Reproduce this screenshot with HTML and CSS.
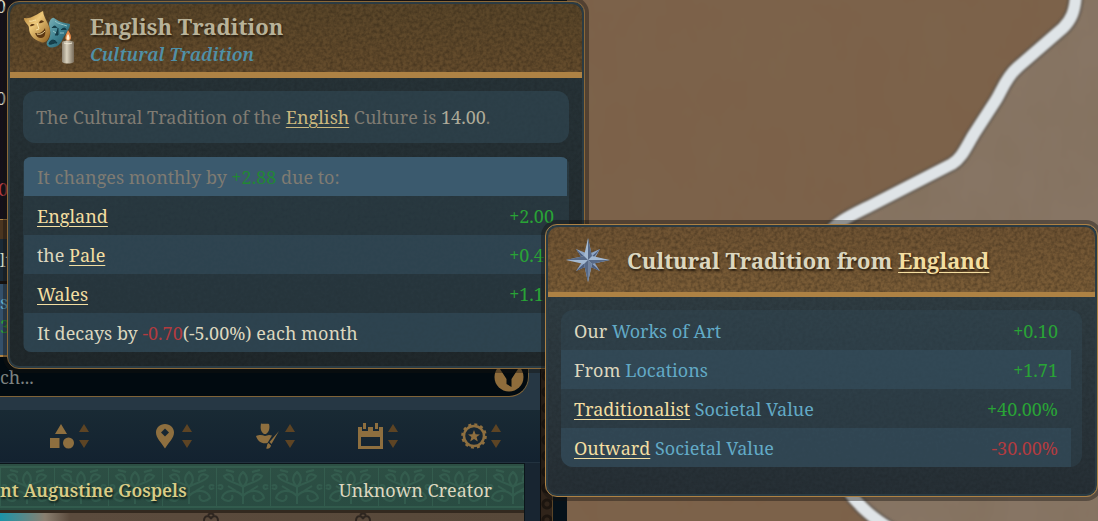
FILE: index.html
```
<!DOCTYPE html>
<html lang="en">
<head>
    <meta charset="UTF-8">
    <meta name="viewport" content="width=device-width, initial-scale=1.0">
    <title>Cultural Tradition</title>
    <link rel="stylesheet" href="styles.css">
</head>
<body>
    <!-- Map -->
    <svg class="map" viewBox="0 0 1098 521" preserveAspectRatio="xMaxYMin slice" aria-hidden="true">
        <defs>
            <filter id="soft"><feGaussianBlur stdDeviation="1"/></filter>
            <filter id="ground" x="0" y="0" width="100%" height="100%">
                <feTurbulence type="fractalNoise" baseFrequency="0.02 0.012" numOctaves="4" seed="4"/>
                <feColorMatrix values="0 0 0 0 0.2  0 0 0 0 0.14  0 0 0 0 0.08  0.5 0 0 0 -0.15"/>
            </filter>
        </defs>
        <rect width="1098" height="521" fill="#7c6149"/>
        <path d="M1076 0C1075 12 1071 20 1063 28L1018 67C1007 76 1002 90 996 100L974 134C966 147 962 158 952 164L834 225L850 494C863 508 875 518 890 528H1098V0Z" fill="#877564"/>
        <rect width="1098" height="521" filter="url(#ground)"/>
        <g fill="none" stroke-linejoin="round">
            <path d="M1076 -6C1075 12 1071 20 1063 28L1018 67C1007 76 1002 90 996 100L974 134C966 147 962 158 952 164L870 206C850 216 836 222 826 236M846 488C860 508 875 520 896 532" stroke="#4e4a45" stroke-width="16" opacity=".6" filter="url(#soft)"/>
            <path d="M1076 -6C1075 12 1071 20 1063 28L1018 67C1007 76 1002 90 996 100L974 134C966 147 962 158 952 164L870 206C850 216 836 222 826 236M846 488C860 508 875 520 896 532" stroke="#dfe4e7" stroke-width="12" filter="url(#soft)"/>
        </g>
    </svg>

    <!-- Works of art panel -->
    <main class="panel">
        <div class="panel-body">
            <div class="scene">
                <span class="scene-value">0</span>
                <span class="scene-value">0</span>
                <span class="scene-value negative">00</span>
            </div>
            <div class="strip"></div>
            <div class="culture-name">lt</div>
            <div class="culture-info">
                <span class="concept">st</span>
                <span class="positive">3</span>
            </div>

            <div class="search-row">
                <div class="search">
                    <input type="text" class="search-input" placeholder="ch..." aria-label="Search">
                    <button type="button" class="filter-btn" aria-label="Filter">
                        <svg viewBox="0 0 30 30" width="30" height="30">
                            <circle cx="15" cy="15" r="14.5" fill="#8e6c3b"/>
                            <path d="M6 7H24L17.500 17V25L12.500 22V17Z" fill="#020a0f"/>
                        </svg>
                    </button>
                </div>
            </div>

            <div class="sort-bar">
                <button type="button" class="sort-btn" aria-label="Sort by type">
                    <svg viewBox="0 0 26 26" width="26" height="26" fill="currentColor">
                        <path d="M12 1L18 11H6ZM1 15H10.500V25H1Z"/>
                        <circle cx="19.500" cy="20" r="5.500"/>
                    </svg>
                    <svg class="arrows" viewBox="0 0 10 26" width="10" height="26"><path d="M5 1L10 9H0ZM5 25L0 17H10Z"/></svg>
                </button>
                <button type="button" class="sort-btn" aria-label="Sort by location">
                    <svg viewBox="0 0 26 26" width="26" height="26" fill="currentColor">
                        <path fill-rule="evenodd" d="M13 1C7.800 1 4 4.800 4 9.500C4 15 9 19 13 25.500C17 19 22 15 22 9.500C22 4.800 18.200 1 13 1ZM13 5.500L17 9.500L13 13.500L9 9.500Z"/>
                    </svg>
                    <svg class="arrows" viewBox="0 0 10 26" width="10" height="26"><path d="M5 1L10 9H0ZM5 25L0 17H10Z"/></svg>
                </button>
                <button type="button" class="sort-btn" aria-label="Sort by creator">
                    <svg viewBox="0 0 26 26" width="26" height="26" fill="currentColor">
                        <path d="M6 0.500C9 1.500 12 0 14 1C15 4 14.500 9 11 11H9C6 9 5 6 6 0.500ZM1 13C5 11.500 7 12 10 13L14 12L17 12.500L12.500 20C7 21 3 19 1 13Z"/>
                        <path d="M24 8L16.500 21L14.500 19ZM13.500 20L16 22.500C15.500 25.500 13 26 11 25.500C12.500 23.500 11.500 21 13.500 20Z"/>
                    </svg>
                    <svg class="arrows" viewBox="0 0 10 26" width="10" height="26"><path d="M5 1L10 9H0ZM5 25L0 17H10Z"/></svg>
                </button>
                <button type="button" class="sort-btn" aria-label="Sort by date">
                    <svg viewBox="0 0 26 26" width="26" height="26" fill="currentColor">
                        <path fill-rule="evenodd" d="M0 4H4V8H10V4H15V8H21V4H25V26H0ZM3 14V23H22V14Z"/>
                        <path d="M5 0H8V6H5ZM17 0H20V6H17Z"/>
                    </svg>
                    <svg class="arrows" viewBox="0 0 10 26" width="10" height="26"><path d="M5 1L10 9H0ZM5 25L0 17H10Z"/></svg>
                </button>
                <button type="button" class="sort-btn" aria-label="Sort by quality">
                    <svg viewBox="0 0 26 26" width="26" height="26" fill="currentColor">
                        <circle cx="13" cy="13" r="10" fill="none" stroke="currentColor" stroke-width="2.500"/>
                        <circle cx="13" cy="13" r="11.700" fill="none" stroke="currentColor" stroke-width="2.200" stroke-dasharray="3 3.125"/>
                        <path d="M13 7L14.600 11.200L19 11.400L15.600 14.100L16.800 18.500L13 16L9.200 18.500L10.400 14.100L7 11.400L11.400 11.200Z"/>
                    </svg>
                    <svg class="arrows" viewBox="0 0 10 26" width="10" height="26"><path d="M5 1L10 9H0ZM5 25L0 17H10Z"/></svg>
                </button>
            </div>

            <article class="work">
                <header class="work-header">
                    <h3>nt Augustine Gospels</h3>
                    <span>Unknown Creator</span>
                </header>
                <div class="work-picture">
                    <svg viewBox="0 0 170 8" width="170" height="8" fill="none" stroke="#2e2620" stroke-width="2">
                        <path d="M1 8C1 2 7 2 8 6C9 2 15 2 15 8M5 2C7 0 9 0 11 2M153 8C153 2 159 2 160 6C161 2 167 2 167 8M157 2C159 0 161 0 163 2"/>
                    </svg>
                </div>
            </article>
        </div>
        <div class="panel-trim"></div>
    </main>

    <!-- Tooltip: English Tradition -->
    <section class="tooltip tooltip-tradition">
        <header class="tooltip-header">
            <svg class="masks" viewBox="0 0 52 54" width="52" height="54" aria-hidden="true">
                <defs>
                    <linearGradient id="gold" x1="0" y1="0" x2="1" y2="1">
                        <stop offset="0" stop-color="#b07b2f"/><stop offset=".4" stop-color="#edc87a"/><stop offset="1" stop-color="#8a5a1c"/>
                    </linearGradient>
                    <linearGradient id="teal" x1="0" y1="0" x2="1" y2="1">
                        <stop offset="0" stop-color="#7fb4bb"/><stop offset=".5" stop-color="#3f8391"/><stop offset="1" stop-color="#1d4f5f"/>
                    </linearGradient>
                    <linearGradient id="wax">
                        <stop offset="0" stop-color="#8f8574"/><stop offset=".4" stop-color="#dad2be"/><stop offset="1" stop-color="#776b5a"/>
                    </linearGradient>
                </defs>
                <path d="M25 12C26 9 28 6 30 7C35 11 41 12 46 13C46 18 42 22 39 27C37 34 31 38 25 36C21 33 23 31 25 28C28 22 25 17 25 12Z" fill="url(#teal)"/>
                <path d="M28 17C30 14 32 15 33 17M37 19C40 16 42 17 42 19M34 17L34 24L31 24M25 33C26 28 31 28 33 32C30 31 28 34 25 33Z" stroke="#123945" stroke-width="1" fill="#173f4b"/>
                <path d="M29 20L32 22M36 22L40 22M31 10C34 13 38 13 43 15" stroke="#93c2c6" stroke-width="1" fill="none"/>
                <path d="M0 7C8 8 13 3 19 0C20 9 27 14 26 22C25 29 21 33 17 31C9 29 5 23 5 17C5 13 0 12 0 7Z" fill="url(#gold)"/>
                <path d="M6 15C7 12 10 13 11 14C9 14 8 16 6 15ZM15 12C16 8 19 9 20 11C18 11 17 13 15 12ZM11 22C16 23 19 21 21 17C22 23 21 27 17 27C14 27 12 25 11 22Z" fill="#5b3713"/>
                <path d="M13 12L15 18L12 19M5 10C8 11 10 9 12 9M13 23C17 24 19 22 21 20" stroke="#f8e2a4" stroke-width="1" fill="none"/>
                <path d="M44 19C48 25 48 29 44 30C40 29 41 25 44 19Z" fill="#e58a4b"/>
                <path d="M44 23C46 26 46 29 44 29C42 29 42 26 44 23Z" fill="#fff0cf"/>
                <path d="M38 31C41 29 47 29 50 31V51C47 53 41 53 38 51Z" fill="url(#wax)"/>
                <path d="M40 32C42 33 46 33 48 32" stroke="#f1ead7" fill="none"/>
            </svg>
            <div class="heading">
                <h2>English Tradition</h2>
                <p class="subtitle">Cultural Tradition</p>
            </div>
        </header>
        <div class="tooltip-body">
            <p class="summary">The Cultural Tradition of the <a href="#english">English</a> Culture is <b>14.00</b>.</p>
            <div class="breakdown">
                <table>
                    <thead>
                        <tr><th colspan="2">It changes monthly by <span class="positive">+2.88</span> due to:</th></tr>
                    </thead>
                    <tbody>
                        <tr><td><a href="#england">England</a></td><td class="value positive">+2.00</td></tr>
                        <tr><td>the <a href="#pale">Pale</a></td><td class="value positive">+0.46</td></tr>
                        <tr><td><a href="#wales">Wales</a></td><td class="value positive">+1.12</td></tr>
                        <tr><td colspan="2">It decays by <span class="negative">-0.70</span>(-5.00%) each month</td></tr>
                    </tbody>
                </table>
            </div>
        </div>
    </section>

    <!-- Tooltip: Cultural Tradition from England -->
    <section class="tooltip tooltip-source">
        <header class="tooltip-header">
            <svg class="compass" viewBox="0 0 46 46" width="46" height="46" aria-hidden="true">
                <path d="M23 23L21 16L11 12L17 21ZM23 23L30 21L35 12L26 16ZM23 23L26 30L35 34L29 25ZM23 23L17 25L11 34L20 30Z" fill="#8ea5c4"/>
                <path d="M23 23L11 12L17 21ZM23 23L35 12L29 20ZM23 23L35 34L26 30ZM23 23L11 34L20 30Z" fill="#4c5d7c"/>
                <path d="M23 1L27 19L45 23L27 27L23 45L19 27L1 23L19 19Z" fill="#a3b9d2"/>
                <path d="M23 1L27 19L23 23ZM45 23L27 27L23 23ZM23 45L19 27L23 23ZM1 23L19 19L23 23Z" fill="#576986"/>
                <path d="M23 45L27 27L23 23Z" fill="#71839f"/>
            </svg>
            <h2>Cultural Tradition from <a href="#england">England</a></h2>
        </header>
        <div class="tooltip-body">
            <div class="breakdown">
                <table>
                    <tbody>
                        <tr><td>Our <span class="concept">Works of Art</span></td><td class="value positive">+0.10</td></tr>
                        <tr><td>From <span class="concept">Locations</span></td><td class="value positive">+1.71</td></tr>
                        <tr><td><a href="#traditionalist">Traditionalist</a> <span class="concept">Societal Value</span></td><td class="value positive">+40.00%</td></tr>
                        <tr><td><a href="#outward">Outward</a> <span class="concept">Societal Value</span></td><td class="value negative">-30.00%</td></tr>
                    </tbody>
                </table>
            </div>
        </div>
    </section>
</body>
</html>
```
FILE: styles.css
```
:root {
    --leather: url("data:image/svg+xml,%3Csvg xmlns='http://www.w3.org/2000/svg' width='240' height='240'%3E%3Cfilter id='n' x='0' y='0' width='100%25' height='100%25'%3E%3CfeTurbulence type='fractalNoise' baseFrequency='.3' numOctaves='2' stitchTiles='stitch'/%3E%3CfeColorMatrix values='0 0 0 0 0 0 0 0 0 0 0 0 0 0 0 .5 0 0 0 -.16'/%3E%3C/filter%3E%3Crect width='240' height='240' filter='url(%23n)'/%3E%3C/svg%3E");
    --leather-soft: url("data:image/svg+xml,%3Csvg xmlns='http://www.w3.org/2000/svg' width='240' height='240'%3E%3Cfilter id='n' x='0' y='0' width='100%25' height='100%25'%3E%3CfeTurbulence type='fractalNoise' baseFrequency='.3' numOctaves='2' stitchTiles='stitch'/%3E%3CfeColorMatrix values='0 0 0 0 0 0 0 0 0 0 0 0 0 0 0 .2 0 0 0 -.06'/%3E%3C/filter%3E%3Crect width='240' height='240' filter='url(%23n)'/%3E%3C/svg%3E");
    --damask: url("data:image/svg+xml,%3Csvg xmlns='http://www.w3.org/2000/svg' width='54' height='46' fill='none' stroke='%23467d68' stroke-opacity='.3' stroke-width='2'%3E%3Cpath d='M0 3H54M0 43H54M0 3V43M27 8C20 14 24 20 27 23C30 20 34 14 27 8ZM27 23C20 18 10 18 8 12C14 8 18 12 17 17M27 23C34 18 44 18 46 12C40 8 36 12 37 17M27 23V40M27 32C20 24 8 26 6 34C12 40 18 36 16 31M27 32C34 24 46 26 48 34C42 40 36 36 38 31M2 22C8 18 8 28 2 24M52 22C46 18 46 28 52 24M12 22L20 27M42 22L34 27M10 6L18 8M44 6L36 8'/%3E%3C/svg%3E");
    --text: #dcd7bf;
    --link: #f3dea1;
    --gold: #ae8244;
}

* {
    margin: 0;
    padding: 0;
    box-sizing: border-box;
}

body {
    min-height: 100vh;
    background-color: #7a5f47;
    color: var(--text);
    font-family: "Noto Serif", "DejaVu Serif Condensed", "DejaVu Serif", serif;
    font-size: 18px;
    line-height: 24px;
    overflow: hidden;
}

button,
input {
    border: none;
    background: none;
    color: inherit;
    font: inherit;
}

a {
    color: var(--link);
    text-decoration: underline;
    text-decoration-thickness: 1px;
    text-underline-offset: 3px;
}

svg {
    display: block;
}

.positive {
    color: #29a336;
}

.negative {
    color: #b23b3f;
}

.concept {
    color: #62aac6;
}

.map {
    position: absolute;
    inset: 0;
    width: 100%;
    height: 100%;
}

/* Panel */
.panel {
    position: relative;
    display: flex;
    width: 567px;
    max-width: 100%;
    height: 100vh;
    overflow: hidden;
    background-color: #06121a;
}

.panel-body {
    flex: 1;
    background-color: #182531;
}

.panel-trim {
    width: 13px;
    margin-right: 14px;
    border-left: 1px solid #0c0b0a;
    border-right: 1px solid #5a4528;
    background: repeating-radial-gradient(circle at 6px 8px, #30241a 0 2px, #1c150f 3px 5px, #30241a 6px 8px);
    background-size: 12px 16px;
}

.scene {
    display: flex;
    flex-direction: column;
    justify-content: space-between;
    height: 219px;
    padding-bottom: 24px;
    background: linear-gradient(90deg, #141019, #30404a 20%, #5c5048 40%, #161217 70%, #06080f);
    line-height: 12px;
}

.scene-value {
    display: flex;
    justify-content: flex-end;
    width: 6px;
}

.scene-value.negative {
    width: 8px;
}

.strip {
    height: 20px;
    border-top: 1px solid var(--gold);
    background-color: #4a3520;
}

.culture-name {
    height: 45px;
    border-bottom: 3px solid #17120f;
    background-color: #1b2a36;
    line-height: 42px;
}

.culture-info {
    display: flex;
    flex-direction: column;
    height: 73px;
    padding-top: 6px;
    border-bottom: 2px solid var(--gold);
    background-color: #34506a;
}

.search-row {
    padding-bottom: 13px;
    background-color: #263744;
}

.search {
    display: flex;
    align-items: center;
    height: 40px;
    margin-right: 11px;
    padding-right: 4px;
    border-right: 1px solid #6f5f3f;
    border-bottom: 1px solid #7f6338;
    border-radius: 0 0 20px 0;
    background-color: #010a10;
}

.search-input {
    flex: 1;
    min-width: 0;
}

.search-input::placeholder {
    color: #7c8280;
    opacity: 1;
}

.filter-btn {
    cursor: pointer;
}

.sort-bar {
    display: grid;
    grid-template-columns: repeat(5, 1fr);
    height: 53px;
    padding: 0 8px 0 18px;
    background: linear-gradient(#192a34, #132230);
    border-bottom: 1px solid #22323f;
}

.sort-btn {
    display: flex;
    justify-content: center;
    align-items: center;
    gap: 4px;
    color: #8e6f3f;
    cursor: pointer;
}

.sort-btn .arrows {
    fill: #5d4424;
}

.work {
    margin-right: 15px;
    border-top: 1px solid #0b151a;
    border-right: 1px solid #0b151a;
}

.work-header {
    display: flex;
    justify-content: space-between;
    align-items: center;
    height: 46px;
    padding: 6px 32px 0 0;
    background: var(--damask), linear-gradient(#2d4f44, #294c42);
}

.work-header h3 {
    color: #d9cc86;
    font-size: 18px;
    font-weight: 600;
    text-shadow: 1px 2px 2px #10201a;
}

.work-picture {
    height: 24px;
    padding-left: 203px;
    border-top: 3px solid #33291f;
    background: linear-gradient(90deg, #1b93a8, #8a7f70 45px, #5b4b3d 70px, #574839);
}

/* Tooltips */
.tooltip {
    position: absolute;
    border: 1px solid var(--gold);
    border-radius: 12px;
    background: var(--leather-soft), linear-gradient(#28353a, #20282b);
    box-shadow: 0 0 0 4px rgba(20, 18, 16, 0.4), inset 0 0 0 2px #2b3b43;
    padding: 2px;
}

.tooltip-tradition {
    left: 7px;
    top: 1px;
    width: 578px;
    border-color: #8b6838;
}

.tooltip-source {
    left: 545px;
    top: 224px;
    right: 0;
    background: var(--leather-soft), linear-gradient(#324147, #262f35);
}

.tooltip-header {
    display: flex;
    align-items: center;
    border-bottom: 6px solid var(--gold);
    border-radius: 10px 10px 0 0;
    background: var(--leather), linear-gradient(#5a4629, #654c2c);
}

.tooltip-header h2 {
    font-size: 22px;
    line-height: 28px;
    text-shadow: 1px 2px 2px #2a1e10;
}

.tooltip-tradition .tooltip-header {
    height: 74px;
    gap: 14px;
    padding-left: 14px;
}

.heading {
    padding-top: 4px;
}

.tooltip-tradition h2 {
    color: #b8b299;
}

.tooltip-source .tooltip-header {
    height: 70px;
    gap: 16px;
    padding-left: 17px;
    border-bottom-width: 5px;
    background: var(--leather), linear-gradient(#705433, #7b5d37);
}

.subtitle {
    color: #4f90a8;
    font-size: 18px;
    font-style: italic;
    font-weight: 600;
    line-height: 28px;
}

.tooltip-body {
    display: flex;
    flex-direction: column;
    gap: 14px;
    padding: 13px 13px 14px;
}

.tooltip-source .tooltip-body {
    padding-bottom: 27px;
}

.summary {
    padding: 14px 13px;
    border-radius: 12px;
    background-color: rgba(52, 78, 92, 0.5);
    color: #7f7b72;
}

.summary a {
    color: #cbb87e;
}

.summary b {
    color: #aeab99;
    font-weight: normal;
}

.breakdown {
    overflow: hidden;
    border-radius: 12px;
    padding: 0 2px 0 1px;
    background-color: rgba(52, 78, 92, 0.35);
}

.tooltip-tradition .breakdown {
    border-radius: 8px;
}

.tooltip-source .breakdown {
    padding: 1px 11px 0 0;
}

.breakdown table {
    width: 100%;
    border-collapse: collapse;
}

.breakdown tr {
    height: 39px;
}

.breakdown th,
.breakdown td {
    padding: 0 13px;
    font-weight: normal;
    text-align: left;
}

.breakdown thead tr {
    background-color: #3b5a6e;
    color: #7f7b72;
}

.breakdown thead .positive {
    color: #218834;
}

.breakdown tbody tr:nth-child(even) {
    background-color: rgba(56, 84, 102, 0.45);
}

.breakdown td.value {
    text-align: right;
}
```
